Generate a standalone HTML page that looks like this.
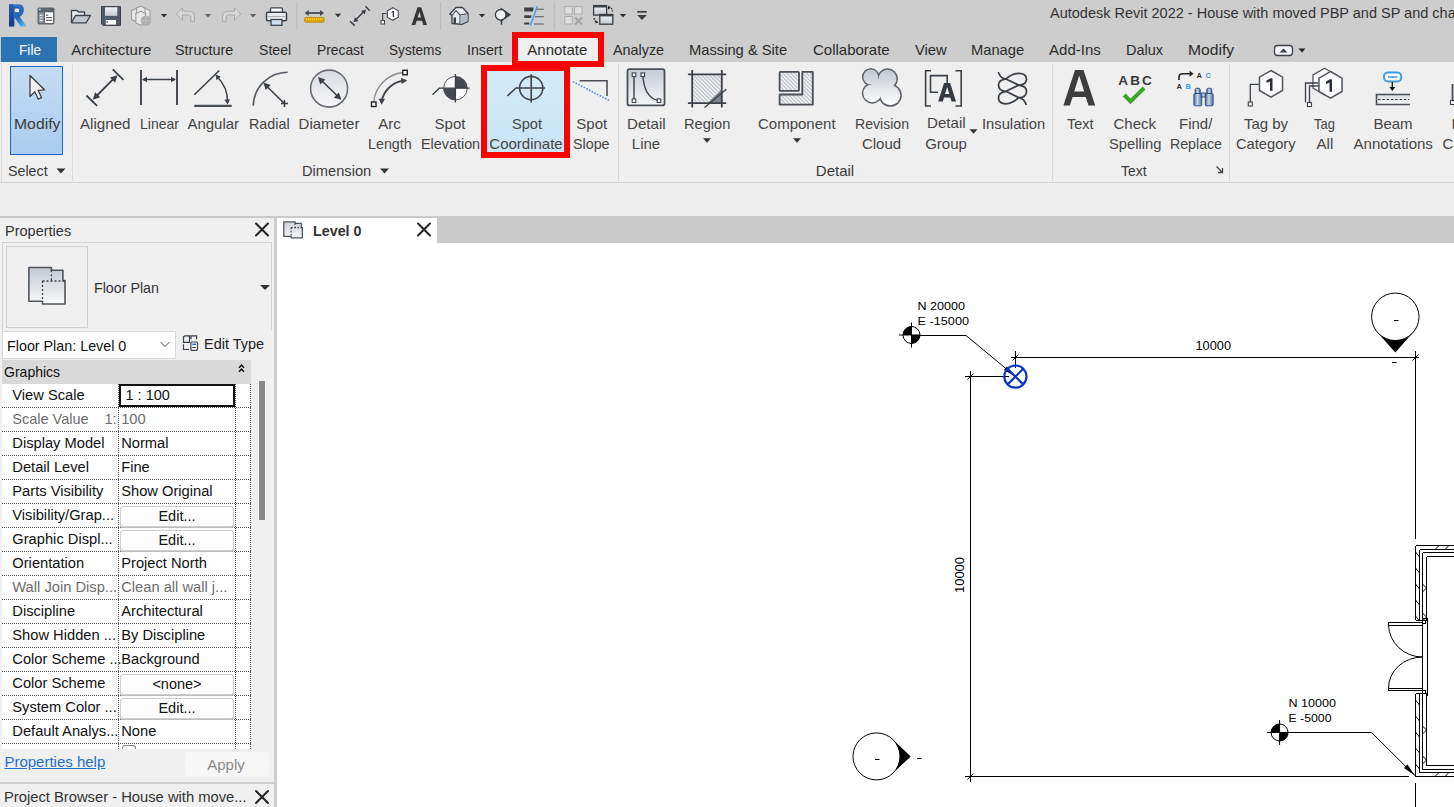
<!DOCTYPE html><html><head><meta charset="utf-8"><style>
*{margin:0;padding:0;box-sizing:border-box}
html,body{width:1454px;height:807px;overflow:hidden;background:#fff}
body{font-family:"Liberation Sans",sans-serif;color:#222;position:relative}
.a{position:absolute}
.t{position:absolute;white-space:nowrap;line-height:1}
svg{position:absolute;overflow:visible}
</style></head><body><div class="a" style="left:0px;top:0px;width:1454px;height:62px;background:#cdcdcd"></div>
<div class="t" style="left:1050.00px;top:6.23px;font-size:14.5px;color:#333;">Autodesk Revit 2022 - House with moved PBP and SP and cha</div>
<svg style="left:0;top:0" width="1" height="1"><defs><linearGradient id="rl" x1="0" y1="0" x2="1" y2="1"><stop offset="0" stop-color="#3a8ad8"/><stop offset=".55" stop-color="#2364b8"/><stop offset="1" stop-color="#62c8ec"/></linearGradient><linearGradient id="rs" x1="0" y1="0" x2="0" y2="1"><stop offset="0" stop-color="#2a62b4"/><stop offset="1" stop-color="#1a3780"/></linearGradient><linearGradient id="qg" x1="0" y1="0" x2="0" y2="1"><stop offset="0" stop-color="#f4f5f7"/><stop offset="1" stop-color="#c3c8d0"/></linearGradient></defs><path d="M9 4.2H18.5C23 4.2 24.2 7.5 23.8 10.8C23.4 14 21.5 16 19.8 16.8L26.7 26.4H20.8L14.5 17.5V26.4H9ZM14 8V12.8H17.6C19.2 12.8 19.8 11.8 19.8 10.4C19.8 9 19.1 8 17.6 8Z" fill="url(#rl)" fill-rule="evenodd"/><path d="M14 8H17.6C19.1 8 19.8 9 19.8 10.4C19.8 11.8 19.2 12.8 17.6 12.8H14Z" fill="#dfe3ea" stroke="#1d3f86" stroke-width="1"/><path d="M9 4.2H13.8V26.4H9Z" fill="url(#rs)"/><rect x="37.5" y="7.5" width="17" height="17" rx="1.8" fill="#5f656d"/><rect x="45" y="12.3" width="8" height="10.7" fill="#fff"/><rect x="38.8" y="12.3" width="5" height="10.7" fill="#8c9299"/><rect x="39" y="8.6" width="1.8" height="1.8" fill="#8fd0f5"/><path d="M39.8 15.3H42.5M39.8 17.9H42.5M39.8 20.5H42.5" stroke="#fff" stroke-width="1"/><path d="M46 15.2H48.2M46 17.6H52M46 20.3H52" stroke="#444" stroke-width="1"/><path d="M71.5 22.8V10.5H77L78.5 12H84.5V15.5" fill="url(#qg)" stroke="#3e444c" stroke-width="1.3" stroke-linejoin="round"/><path d="M71.5 22.8L75.5 15.5H90.5L86 22.8Z" fill="#c3c8d0" stroke="#3e444c" stroke-width="1.3" stroke-linejoin="round"/><path d="M101.5 6.5H120.5V25.5H103L101.5 24Z" fill="#525b67" stroke="#3b424c" stroke-width="1"/><rect x="105" y="7.3" width="12.3" height="8.6" fill="url(#qg)"/><rect x="105.8" y="20" width="10.2" height="4.6" fill="#fff"/><rect x="106.5" y="21" width="1.3" height="2" fill="#666"/><g fill="#e8e8e8" stroke="#9c9c9c" stroke-width="1.1" stroke-linejoin="round"><path d="M131.5 10.5L136 8.5L140.5 10.5V19.5L136 21.5L131.5 19.5Z"/><path d="M141 10.5L145.5 8.5L150 10.5V19.5L145.5 21.5L141 19.5Z"/><path d="M136.5 8L140.8 6.2L145 8V13L140.8 14.8L136.5 13Z"/><path d="M135.8 13.5L140.8 11.3L145.5 13.5V23L140.8 25.3L135.8 23Z"/></g><circle cx="146" cy="20.8" r="5.2" fill="#acacac"/><path d="M141 20.8H151M146 15.8V25.8" stroke="#c4c4c4" stroke-width=".8"/><path d="M160.8 14.0H167.2L164 17.6Z" fill="#333"/><path d="M204.8 14.0H211.2L208 17.6Z" fill="#666"/><path d="M249.8 14.0H256.2L253 17.6Z" fill="#666"/><path d="M334.8 13.7H341.2L338 17.3Z" fill="#333"/><path d="M478.8 14.0H485.2L482 17.6Z" fill="#333"/><path d="M619.8 14.0H626.2L623 17.6Z" fill="#333"/><path d="M176.3 14L182.5 7.8V11.2H189.5C192.5 11.2 194.5 13.5 194.5 16.5V21.5H190.8V17.2C190.8 15.8 190 15 188.5 15H182.5V20.3Z" fill="#d6d6d6" stroke="#a9a9a9" stroke-width="1" stroke-linejoin="round"/><path d="M240.7 14L234.5 7.8V11.2H227.5C224.5 11.2 222.5 13.5 222.5 16.5V21.5H226.2V17.2C226.2 15.8 227 15 228.5 15H234.5V20.3Z" fill="#d6d6d6" stroke="#a9a9a9" stroke-width="1" stroke-linejoin="round"/><rect x="270.5" y="7.8" width="12" height="6" rx="1" fill="#fbfbfb" stroke="#3a414a" stroke-width="1.3"/><rect x="266.5" y="12.3" width="20" height="8.5" rx="1.5" fill="#e9ebee" stroke="#3a414a" stroke-width="1.5"/><path d="M267 16.5H286" stroke="#aab0b8" stroke-width="1"/><rect x="271" y="19.5" width="11" height="5.8" fill="#cfe0ee" stroke="#3a414a" stroke-width="1.3"/><path d="M296.8 2V30" stroke="#b9b9b9" stroke-width="1"/><path d="M440.6 2V30" stroke="#b9b9b9" stroke-width="1"/><path d="M554.3 2V30" stroke="#b9b9b9" stroke-width="1"/><path d="M306 13H323" stroke="#424952" stroke-width="1.8"/><path d="M304.70 13.00L308.70 10.00L308.70 16.00Z" fill="#424952"/><path d="M324.00 13.00L320.00 16.00L320.00 10.00Z" fill="#424952"/><rect x="304.7" y="17.4" width="19.3" height="4.8" rx="1" fill="#e6a800" stroke="#b98300" stroke-width=".8"/><path d="M306 19H323" stroke="#fff2a0" stroke-width=".8" stroke-dasharray="1 1"/><path d="M365.4 6.3L369.7 10.7M350 21.3L354.8 25.6M355 20.5L364.5 11" stroke="#3b4149" stroke-width="1.5"/><path d="M366.00 9.50L364.78 14.55L361.01 10.97Z" fill="#3b4149"/><path d="M353.50 22.30L354.84 17.28L358.52 20.96Z" fill="#3b4149"/><path d="M392.80 7.70L398.26 10.85L398.26 17.15L392.80 20.30L387.34 17.15L387.34 10.85Z" fill="#fff" stroke="#50555c" stroke-width="1.2"/><path d="M386.4 13.5H382.7V20.5" stroke="#3b4149" stroke-width="1.1" fill="none"/><rect x="381" y="20.5" width="3.5" height="3.5" fill="#fff" stroke="#3b4149"/><path d="M390.8 12.5L393 11H394V17H392.7V12.6Z" fill="#333"/><path d="M417.5 7.3H421.2L427 25.1H423.4L422 20.8H416.7L415.3 25.1H411.6ZM417.6 17.6H421.1L419.35 11.8Z" fill="#363636" fill-rule="evenodd"/><path d="M449.8 14L456 7.5H462.5L468 13.5V21.5L462 24.3L452 23.5V15.5Z" fill="#e8eaee" stroke="#3b4149" stroke-width="1.3" stroke-linejoin="round"/><path d="M452 15.5L456 10.5L460 15V23.8M460 15L468 13.5M456 7.5L462.5 7.5" stroke="#3b4149" stroke-width="1.1" fill="none"/><rect x="453.5" y="17.5" width="2.5" height="6" fill="#3b4149"/><path d="M460.5 16L467.5 14.5V21L460.5 23.5Z" fill="#b5bcc6"/><path d="M500.7 7.4L511.1 14.8L500.7 22Z" fill="#3a3f46"/><circle cx="500.7" cy="14.8" r="5.3" fill="#eef0f3" stroke="#3a3f46" stroke-width="1.3"/><path d="M501.5 20V24.7" stroke="#3a3f46" stroke-width="1.5"/><path d="M524.2 7.4H533.7L533 11.5H524.2ZM524.2 15.3H531.5L531 18H524.2ZM524.2 22.4H529.5L529.2 24.4H524.2Z" fill="#3a3f46"/><path d="M536 9.3H543.8M535 16.7H543.8M534 24H543.8" stroke="#555" stroke-width="1.1"/><path d="M537.4 6.1L530.4 25.5" stroke="#4aa0f0" stroke-width="1.5"/><g fill="#dedede" stroke="#adadad" stroke-width="1"><rect x="564.8" y="6.6" width="7.5" height="7.5"/><rect x="574.5" y="6.6" width="7.5" height="7.5"/><rect x="564.8" y="16.5" width="7.5" height="7.5"/></g><path d="M575 17.5L582 24.5M582 17.5L575 24.5" stroke="#a5a5a5" stroke-width="2"/><rect x="593.6" y="5.6" width="13" height="9.5" fill="url(#qg)" stroke="#3a3f46" stroke-width="1.3"/><path d="M593.6 6.5H606.6" stroke="#3a3f46" stroke-width="2"/><rect x="599.8" y="14.5" width="13" height="9.7" fill="url(#qg)" stroke="#3a3f46" stroke-width="1.3"/><path d="M599.8 15.4H612.8" stroke="#3a3f46" stroke-width="2"/><path d="M609 7Q612 7.5 612.5 11.5M594 18Q594.5 21 596.5 22" stroke="#222" stroke-width="1.2" fill="none" stroke-dasharray="1.5 1"/><path d="M608 5.5L610.5 8L608 9.5Z M596 20.5L598.5 22.5L595.5 23.5Z" fill="#222"/><path d="M637.2 11.8H646.8" stroke="#3a3f46" stroke-width="1.7"/><path d="M637.2 15H646.8L642 19.9Z" fill="#3a3f46"/></svg>
<div class="a" style="left:1px;top:37px;width:56px;height:25px;background:#2b73b2"></div>
<div class="t" style="left:18.60px;top:42.30px;font-size:15px;color:#fff;transform:scaleX(0.913);transform-origin:0 0;">File</div>
<div class="a" style="left:518px;top:38px;width:80px;height:24px;background:#efefef"></div>
<div class="t" style="left:71.20px;top:42.10px;font-size:15px;color:#2b2b2b;">Architecture</div>
<div class="t" style="left:175.20px;top:42.10px;font-size:15px;color:#2b2b2b;transform:scaleX(0.959);transform-origin:0 0;">Structure</div>
<div class="t" style="left:259.20px;top:42.10px;font-size:15px;color:#2b2b2b;transform:scaleX(0.939);transform-origin:0 0;">Steel</div>
<div class="t" style="left:317.00px;top:42.10px;font-size:15px;color:#2b2b2b;transform:scaleX(0.921);transform-origin:0 0;">Precast</div>
<div class="t" style="left:389.30px;top:42.10px;font-size:15px;color:#2b2b2b;transform:scaleX(0.908);transform-origin:0 0;">Systems</div>
<div class="t" style="left:467.20px;top:42.10px;font-size:15px;color:#2b2b2b;transform:scaleX(0.944);transform-origin:0 0;">Insert</div>
<div class="t" style="left:527.30px;top:42.10px;font-size:15px;color:#2b2b2b;">Annotate</div>
<div class="t" style="left:613.20px;top:42.10px;font-size:15px;color:#2b2b2b;transform:scaleX(0.957);transform-origin:0 0;">Analyze</div>
<div class="t" style="left:689.20px;top:42.10px;font-size:15px;color:#2b2b2b;transform:scaleX(0.981);transform-origin:0 0;">Massing &amp; Site</div>
<div class="t" style="left:813.00px;top:42.10px;font-size:15px;color:#2b2b2b;">Collaborate</div>
<div class="t" style="left:915.00px;top:42.10px;font-size:15px;color:#2b2b2b;transform:scaleX(0.985);transform-origin:0 0;">View</div>
<div class="t" style="left:971.20px;top:42.10px;font-size:15px;color:#2b2b2b;transform:scaleX(0.980);transform-origin:0 0;">Manage</div>
<div class="t" style="left:1049.10px;top:42.10px;font-size:15px;color:#2b2b2b;">Add-Ins</div>
<div class="t" style="left:1125.60px;top:42.10px;font-size:15px;color:#2b2b2b;transform:scaleX(0.966);transform-origin:0 0;">Dalux</div>
<div class="t" style="left:1187.50px;top:42.10px;font-size:15px;color:#2b2b2b;transform:scaleX(1.045);transform-origin:0 0;">Modify</div>
<svg style="left:0;top:0" width="1" height="1"><rect x="1274.5" y="45.5" width="18" height="10" rx="3" fill="#f4f4f4" stroke="#3d4450" stroke-width="1.3"/><path d="M1279.5 52.5L1283.5 48.5L1287.5 52.5Z" fill="#3d4450"/></svg>
<svg style="left:0;top:0" width="1" height="1"><path d="M1298.5 48.5L1305.5 48.5L1302 52.5Z" fill="#222"/></svg>
<div class="a" style="left:0px;top:62px;width:1454px;height:120px;background:#efefef"></div>
<div class="a" style="left:0px;top:182px;width:1454px;height:1px;background:#d2d2d2"></div>
<div class="a" style="left:1px;top:63px;width:1px;height:119px;background:#d9d9d9"></div>
<div class="a" style="left:72px;top:64px;width:1px;height:117px;background:#d9d9d9"></div>
<div class="a" style="left:618px;top:64px;width:1px;height:117px;background:#d9d9d9"></div>
<div class="a" style="left:1052px;top:64px;width:1px;height:117px;background:#d9d9d9"></div>
<div class="a" style="left:1229px;top:64px;width:1px;height:117px;background:#d9d9d9"></div>
<div class="a" style="left:0px;top:183px;width:1454px;height:34px;background:#eeeeee"></div>
<div class="a" style="left:0px;top:216px;width:1454px;height:2px;background:#c9c9c9"></div>
<div class="a" style="left:10px;top:66px;width:53px;height:89px;background:linear-gradient(#c5dcf3,#a9cdee);border:1.5px solid #1c67c4"></div>
<div class="t" style="left:13.60px;top:115.80px;font-size:15px;color:#3b3b3b;transform:scaleX(1.050);transform-origin:0 0;">Modify</div>
<div class="t" style="left:8.40px;top:162.80px;font-size:15px;color:#3b3b3b;transform:scaleX(0.950);transform-origin:0 0;">Select</div>
<svg style="left:0;top:0" width="1" height="1"><path d="M56.5 168.5L65.5 168.5L61 173.5Z" fill="#333"/></svg>
<div class="t" style="left:301.90px;top:162.80px;font-size:15px;color:#3b3b3b;transform:scaleX(0.977);transform-origin:0 0;">Dimension</div>
<svg style="left:0;top:0" width="1" height="1"><path d="M380.0 168.5L389.0 168.5L384.5 173.5Z" fill="#333"/></svg>
<div class="t" style="left:815.80px;top:162.80px;font-size:15px;color:#3b3b3b;">Detail</div>
<div class="t" style="left:1121.00px;top:162.80px;font-size:15px;color:#3b3b3b;transform:scaleX(0.931);transform-origin:0 0;">Text</div>
<svg style="left:0;top:0" width="1" height="1"><path d="M1216.5 166.5L1222.5 172.5M1222.5 168v4.5h-4.5" stroke="#444" stroke-width="1.3" fill="none"/></svg>
<div class="a" style="left:487px;top:71px;width:77px;height:81px;background:linear-gradient(#d3eaf8,#c9e5f6)"></div>
<div class="a" style="left:481px;top:65px;width:89px;height:93px;border:6px solid #f00"></div>
<div class="a" style="left:512px;top:32px;width:92px;height:35px;border:6px solid #f00"></div>
<div class="t" style="left:79.50px;top:115.80px;font-size:15px;color:#444444;transform:scaleX(1.010);transform-origin:0 0;">Aligned</div>
<div class="t" style="left:139.60px;top:115.80px;font-size:15px;color:#444444;transform:scaleX(0.933);transform-origin:0 0;">Linear</div>
<div class="t" style="left:187.40px;top:115.80px;font-size:15px;color:#444444;">Angular</div>
<div class="t" style="left:248.50px;top:115.80px;font-size:15px;color:#444444;transform:scaleX(0.955);transform-origin:0 0;">Radial</div>
<div class="t" style="left:298.60px;top:115.80px;font-size:15px;color:#444444;">Diameter</div>
<div class="t" style="left:367.60px;top:136.30px;font-size:15px;color:#444444;transform:scaleX(0.952);transform-origin:0 0;">Length</div>
<div class="t" style="left:420.70px;top:136.30px;font-size:15px;color:#444444;transform:scaleX(0.958);transform-origin:0 0;">Elevation</div>
<div class="t" style="left:511.60px;top:115.80px;font-size:15px;color:#444444;transform:scaleX(0.974);transform-origin:0 0;">Spot</div>
<div class="t" style="left:489.30px;top:136.30px;font-size:15px;color:#444444;">Coordinate</div>
<div class="t" style="left:576.30px;top:115.80px;font-size:15px;color:#444444;">Spot</div>
<div class="t" style="left:572.80px;top:136.30px;font-size:15px;color:#444444;transform:scaleX(0.953);transform-origin:0 0;">Slope</div>
<div class="t" style="left:626.50px;top:115.80px;font-size:15px;color:#444444;transform:scaleX(1.010);transform-origin:0 0;">Detail</div>
<div class="t" style="left:683.50px;top:115.80px;font-size:15px;color:#444444;transform:scaleX(0.973);transform-origin:0 0;">Region</div>
<div class="t" style="left:758.00px;top:115.80px;font-size:15px;color:#444444;">Component</div>
<div class="t" style="left:854.50px;top:115.80px;font-size:15px;color:#444444;transform:scaleX(0.939);transform-origin:0 0;">Revision</div>
<div class="t" style="left:926.70px;top:115.10px;font-size:15px;color:#444444;transform:scaleX(1.010);transform-origin:0 0;">Detail</div>
<div class="t" style="left:981.60px;top:115.80px;font-size:15px;color:#444444;transform:scaleX(0.983);transform-origin:0 0;">Insulation</div>
<div class="t" style="left:1066.50px;top:115.80px;font-size:15px;color:#444444;transform:scaleX(0.964);transform-origin:0 0;">Text</div>
<div class="t" style="left:1108.60px;top:136.30px;font-size:15px;color:#444444;transform:scaleX(0.981);transform-origin:0 0;">Spelling</div>
<div class="t" style="left:1169.70px;top:136.30px;font-size:15px;color:#444444;transform:scaleX(0.945);transform-origin:0 0;">Replace</div>
<div class="t" style="left:1236.20px;top:136.30px;font-size:15px;color:#444444;transform:scaleX(0.979);transform-origin:0 0;">Category</div>
<div class="t" style="left:1314.40px;top:115.80px;font-size:15px;color:#444444;transform:scaleX(0.864);transform-origin:0 0;">Tag</div>
<div class="t" style="left:1353.60px;top:136.30px;font-size:15px;color:#444444;">Annotations</div>
<div class="t" style="left:378.25px;top:115.80px;font-size:15px;color:#444444;">Arc</div>
<div class="t" style="left:434.55px;top:115.80px;font-size:15px;color:#444444;">Spot</div>
<div class="t" style="left:631.80px;top:136.30px;font-size:15px;color:#444444;">Line</div>
<div class="t" style="left:861.90px;top:136.30px;font-size:15px;color:#444444;">Cloud</div>
<div class="t" style="left:925.15px;top:135.50px;font-size:15px;color:#444444;">Group</div>
<div class="t" style="left:1113.50px;top:115.80px;font-size:15px;color:#444444;">Check</div>
<div class="t" style="left:1179.00px;top:115.80px;font-size:15px;color:#444444;">Find/</div>
<div class="t" style="left:1243.90px;top:115.80px;font-size:15px;color:#444444;">Tag by</div>
<div class="t" style="left:1316.55px;top:136.30px;font-size:15px;color:#444444;">All</div>
<div class="t" style="left:1373.40px;top:115.80px;font-size:15px;color:#444444;">Beam</div>
<div class="t" style="left:1451.60px;top:115.80px;font-size:15px;color:#444444;">N</div>
<div class="t" style="left:1442.40px;top:136.30px;font-size:15px;color:#444444;">Ca</div>
<svg style="left:0;top:0" width="1" height="1"><path d="M703.0 138.25L711.0 138.25L707 142.75Z" fill="#333"/></svg>
<svg style="left:0;top:0" width="1" height="1"><path d="M793.0 138.25L801.0 138.25L797 142.75Z" fill="#333"/></svg>
<svg style="left:0;top:0" width="1" height="1"><path d="M969.5 129.25L977.5 129.25L973.5 133.75Z" fill="#333"/></svg>
<svg style="left:0;top:0" width="1" height="1"><defs><linearGradient id="gv" x1="0" y1="0" x2="0" y2="1"><stop offset="0" stop-color="#c6cbd4"/><stop offset="1" stop-color="#f6f7f9"/></linearGradient><linearGradient id="gc" x1="0" y1="0" x2="0" y2="1"><stop offset="0" stop-color="#c3c8d1"/><stop offset="1" stop-color="#ffffff"/></linearGradient><linearGradient id="gd" x1="0" y1="0" x2="0" y2="1"><stop offset="0" stop-color="#d9dce1"/><stop offset="1" stop-color="#f7f7f8"/></linearGradient><pattern id="hat" width="2.8" height="3" patternUnits="userSpaceOnUse" patternTransform="rotate(-45)"><rect width="2.8" height="3" fill="#eef0f2"/><rect width="1" height="3" fill="#b5b9bf"/></pattern><linearGradient id="gb" x1="0" y1="0" x2="1" y2="0"><stop offset="0" stop-color="#3e5f8e"/><stop offset=".5" stop-color="#a9bfdc"/><stop offset="1" stop-color="#3e5f8e"/></linearGradient></defs><path d="M30 75.5V96.5L34.8 91.8L38.3 99.2L41.6 97.7L38.2 90.4L44.5 89.8Z" fill="#f2f3f5" stroke="#3a3f46" stroke-width="1.3" stroke-linejoin="round"/><path d="M112.7 69.3L123.5 79.9M86.4 95.5L97.1 105.8M95 97.5L115 77.3" stroke="#3c4149" fill="none" stroke-width="1.8"/><path d="M117.50 75.20L115.04 82.68L109.99 77.54Z" fill="#3c4149"/><path d="M92.70 99.70L95.13 92.21L100.21 97.33Z" fill="#3c4149"/><path d="M141 70V105M177 70V105" stroke="#4a4f57" stroke-width="2"/><path d="M143 79.5H175" stroke="#3c4149" fill="none" stroke-width="1.5"/><path d="M142.00 79.50L147.00 76.70L147.00 82.30Z" fill="#3c4149"/><path d="M176.00 79.50L171.00 82.30L171.00 76.70Z" fill="#3c4149"/><path d="M194.3 94.7L219.3 70.5" stroke="#3c4149" fill="none" stroke-width="1.6"/><path d="M194.3 105.8H231.7" stroke="#4a4f57" stroke-width="2.2"/><path d="M216.5 76A36 36 0 0 1 227.6 103" stroke="#3c4149" fill="none" stroke-width="1.5"/><path d="M215.50 74.50L220.83 76.60L216.50 80.14Z" fill="#3c4149"/><path d="M227.60 104.50L224.35 99.78L229.93 99.26Z" fill="#3c4149"/><path d="M253.3 105.8A34.5 34 0 0 1 287.6 72.3" stroke="#555a62" stroke-width="1.6" fill="none"/><path d="M265 84.5L284.3 103.5M281 103.5H288M284.5 100V107" stroke="#3c4149" fill="none" stroke-width="1.6"/><path d="M263.30 82.50L270.80 84.90L265.70 90.00Z" fill="#3c4149"/><circle cx="329.1" cy="88.6" r="18.5" fill="url(#gd)" stroke="#6a6e74" stroke-width="1.6"/><path d="M321 80L338.5 97" stroke="#3c4149" fill="none" stroke-width="1.6"/><path d="M318.00 76.90L325.45 79.44L320.27 84.44Z" fill="#3c4149"/><path d="M341.50 99.80L333.91 97.71L338.79 92.41Z" fill="#3c4149"/><path d="M373.7 102A33 33 0 0 1 403 72.5" stroke="#8a8d92" stroke-width="1.4" fill="none"/><rect x="371.5" y="102" width="4.5" height="4.5" fill="#fff" stroke="#222" stroke-width="1.4"/><rect x="402.8" y="70.3" width="4.5" height="4.5" fill="#fff" stroke="#222" stroke-width="1.4"/><path d="M381.7 101A26 26 0 0 1 403 80.6" stroke="#3c4149" fill="none" stroke-width="1.8"/><path d="M407.30 80.60L401.48 84.12L401.13 77.73Z" fill="#3c4149"/><path d="M381.70 104.70L378.58 98.66L384.98 98.74Z" fill="#3c4149"/><circle cx="455.4" cy="88.2" r="11.8" fill="#fbfbfb" stroke="#555" stroke-width="1"/><path d="M455.4 88.2V76.4A11.8 11.8 0 0 1 467.2 88.2Z M455.4 88.2V100.0A11.8 11.8 0 0 1 443.59999999999997 88.2Z" fill="#454a52"/><path d="M432.5 94.8L439.3 88.2H469.6M455.4 74.1V102.6" stroke="#3c4149" fill="none" stroke-width="1.3"/><circle cx="531.2" cy="88" r="11.6" fill="none" stroke="#3f444b" stroke-width="1.6"/><path d="M507.4 96L516 88H545M531.2 74.3V102.5" stroke="#3f444b" stroke-width="1.6" fill="none"/><path d="M573 81.6L609.4 100.6" stroke="#5c8fd6" stroke-width="1.6" stroke-dasharray="1.6 1.4" fill="none"/><path d="M579.6 80.8H607V96" stroke="#4a4f57" stroke-width="1.6" fill="none"/><rect x="627.5" y="69.2" width="37" height="36.2" rx="2" fill="url(#gv)" stroke="#4a4f57" stroke-width="1.8"/><path d="M634 74.7V100.7M642.8 74.7Q644 98 659 100.7" stroke="#3c4149" fill="none" stroke-width="1.4"/><rect x="632.2" y="72.9" width="3.6" height="3.6" fill="#fff" stroke="#3c4149" stroke-width="1.1"/><rect x="632.2" y="98.9" width="3.6" height="3.6" fill="#fff" stroke="#3c4149" stroke-width="1.1"/><rect x="641.0" y="72.9" width="3.6" height="3.6" fill="#fff" stroke="#3c4149" stroke-width="1.1"/><rect x="657.2" y="98.9" width="3.6" height="3.6" fill="#fff" stroke="#3c4149" stroke-width="1.1"/><rect x="692.2" y="74.3" width="29.6" height="28.9" fill="url(#hat)"/><path d="M707.4 103.2L721.8 89.2V103.2Z" fill="#7d838c"/><path d="M687.9 74.3H726.2M687.9 103.2H726.2M692.2 70V107.5M721.8 70V107.5" stroke="#3c4149" fill="none" stroke-width="1.8"/><path d="M704.5 107.5L726.2 89.2" stroke="#3c4149" fill="none" stroke-width="1.4"/><rect x="779.6" y="71.8" width="19.4" height="19.1" rx="1" fill="url(#hat)" stroke="#4a4f57" stroke-width="1.8"/><path d="M802.3 71.8H812.8V104.6H779.6V94.5H802.3Z" fill="url(#hat)" stroke="#4a4f57" stroke-width="1.8" stroke-linejoin="round"/><defs><linearGradient id="gcl" gradientUnits="userSpaceOnUse" x1="0" y1="69" x2="0" y2="106"><stop offset="0" stop-color="#c2c7d0"/><stop offset="1" stop-color="#ffffff"/></linearGradient></defs><g fill="#5d6168"><circle cx="870.8" cy="77" r="8.9"/><circle cx="887.5" cy="78.8" r="10.5"/><circle cx="872.3" cy="93.2" r="10.5"/><circle cx="890.3" cy="95.3" r="11.5"/></g><g fill="url(#gcl)"><circle cx="870.8" cy="77" r="7.4"/><circle cx="887.5" cy="78.8" r="9.0"/><circle cx="872.3" cy="93.2" r="9.0"/><circle cx="890.3" cy="95.3" r="10.0"/><rect x="872" y="79" width="17" height="16"/></g><path d="M931 70.7H925.6V106H931M955.5 70.7H961.2V106H955.5" stroke="#3c4149" fill="none" stroke-width="1.6"/><path d="M938 92.3H930.5V75.6H947.2V83" stroke="#3c4149" fill="none" stroke-width="1.6"/><path d="M944 83H950.2L956 101.6H951.5L950.3 97.5H944L942.8 101.6H938.2ZM945 94H949.3L947.2 87Z" fill="#353a42" fill-rule="evenodd"/><path d="M998.5 72.8Q1001 78.9 1005.9 78.9M1005.9 78.9Q1012 73.3 1019 73.3Q1026.5 73.3 1026.5 79Q1026.5 84.8 1018.8 85.1M1005.9 78.9L1018.8 85.1M1005.9 78.9Q998.5 80 998.5 85.1Q998.5 91 1005.9 91.3M1018.8 85.1L1005.9 91.3M1018.8 85.1Q1026.5 86 1026.5 91.4Q1026.5 97.2 1018.8 97.7M1005.9 91.3L1018.8 97.7M1005.9 91.3Q998.5 92.5 998.5 97.8Q998.5 103.8 1006 103.8Q1012 103.8 1018.8 97.7M1018.8 97.7Q1024 98.5 1026 104.3" stroke="#3a3f46" stroke-width="1.7" fill="none" stroke-linecap="round"/><path d="M1075 70H1083.5L1095.2 105.6H1088.5L1085.8 97H1072.6L1069.9 105.6H1063.4ZM1074.2 91.5H1084.2L1079.2 75.5Z" fill="#3d3d3d" fill-rule="evenodd"/><text x="1118.3" y="84.9" font-family="Liberation Sans" font-weight="bold" font-size="13.5" fill="#3a3a3a" textLength="33.5" lengthAdjust="spacing">ABC</text><path d="M1124.3 95L1130.5 101.5L1144.1 88" stroke="#3aa62a" stroke-width="4" fill="none"/><path d="M1179 80V77C1179 74.5 1181 73.8 1183 73.8H1190" stroke="#222" stroke-width="1.6" fill="none"/><path d="M1193.60 73.80L1189.60 76.80L1189.60 70.80Z" fill="#222"/><text x="1196.6" y="77.6" font-family="Liberation Sans" font-weight="bold" font-size="7.5" fill="#333">A</text><text x="1205.4" y="77.6" font-family="Liberation Sans" font-weight="bold" font-size="7.5" fill="#3a9af0">C</text><text x="1176.4" y="88.8" font-family="Liberation Sans" font-weight="bold" font-size="7.5" fill="#333">A</text><text x="1185.4" y="88.8" font-family="Liberation Sans" font-weight="bold" font-size="7.5" fill="#3a9af0">B</text><defs><linearGradient id="gbt" x1="0" y1="0" x2="1" y2="0"><stop offset="0" stop-color="#4d6d9c"/><stop offset=".45" stop-color="#c9d8ec"/><stop offset="1" stop-color="#4d6d9c"/></linearGradient></defs><g fill="url(#gbt)" stroke="#34507a" stroke-width="1"><rect x="1195.2" y="88.3" width="5" height="6" rx="1.5"/><rect x="1206.8" y="88.3" width="5" height="6" rx="1.5"/><rect x="1193.9" y="93.5" width="7.8" height="12.3" rx="1.2"/><rect x="1205.3" y="93.5" width="7.8" height="12.3" rx="1.2"/><rect x="1201.2" y="93" width="4.6" height="4"/></g><path d="M1271.00 70.50L1282.52 77.15L1282.52 90.45L1271.00 97.10L1259.48 90.45L1259.48 77.15Z" fill="#fff" stroke="#50555c" stroke-width="1.5"/><path d="M1258.8 84.4H1250.3V102" stroke="#3c4149" stroke-width="1.3" fill="none"/><rect x="1248.3" y="102" width="4" height="4" fill="#fff" stroke="#3c4149" stroke-width="1.1"/><path d="M1266.5 80.5L1270.6 78.2H1272.5V90.7H1270V81.5L1266.5 83Z" fill="#2a2e35"/><path d="M1316.5 78L1324 73.5L1329 70.5" stroke="#50555c" stroke-width="1.3" fill="none"/><path d="M1324.50 68.20L1336.02 74.85L1336.02 88.15L1324.50 94.80L1312.98 88.15L1312.98 74.85Z" fill="#fff" stroke="#50555c" stroke-width="1.3"/><path d="M1330.50 71.50L1342.02 78.15L1342.02 91.45L1330.50 98.10L1318.98 91.45L1318.98 78.15Z" fill="#fff" stroke="#50555c" stroke-width="1.5"/><path d="M1318 83H1305.5V102.5M1318.7 86H1309.5V104" stroke="#3c4149" stroke-width="1.3" fill="none"/><rect x="1307.5" y="102.5" width="4" height="4" fill="#fff" stroke="#3c4149" stroke-width="1.1"/><path d="M1326 81.5L1330 79.2H1332V91.7H1329.5V82.5L1326 84Z" fill="#2a2e35"/><rect x="1384" y="72.5" width="17.2" height="9" rx="4" fill="#fff" stroke="#3d9cf0" stroke-width="2"/><path d="M1388 77H1397.5" stroke="#3d9cf0" stroke-width="1.6"/><path d="M1392.3 82V88" stroke="#111" stroke-width="1.3"/><path d="M1392.30 91.00L1389.30 87.00L1395.30 87.00Z" fill="#111"/><rect x="1376.5" y="94.5" width="33.5" height="10" fill="url(#gd)"/><path d="M1410 94.5H1376.5V104.5H1410" stroke="#4a4f57" stroke-width="1.6" fill="none"/><path d="M1378 99.5H1409" stroke="#333" stroke-width="1.2" stroke-dasharray="2.5 1.8"/><path d="M1452.5 84V102" stroke="#4a4f57" stroke-width="1.8"/><rect x="1450.5" y="100.5" width="4" height="4" fill="#fff" stroke="#3c4149" stroke-width="1.1"/></svg>
<div class="a" style="left:0px;top:218px;width:274px;height:589px;background:#f0f0f0"></div>
<div class="a" style="left:274px;top:218px;width:3px;height:589px;background:#cdcdcd"></div>
<div class="t" style="left:4.50px;top:223.30px;font-size:15px;color:#333;transform:scaleX(0.968);transform-origin:0 0;">Properties</div>
<svg style="left:0;top:0" width="1" height="1"><path d="M256 223.5L268 235.5M268 223.5L256 235.5" stroke="#222" stroke-width="2" stroke-linecap="round"/></svg>
<div class="a" style="left:2px;top:242px;width:270px;height:88px;border:1px solid #d4d4d4;border-bottom:none"></div>
<div class="a" style="left:6px;top:246px;width:82px;height:82px;border:1px solid #cfcfcf"></div>
<svg style="left:0;top:0" width="1" height="1"><defs><linearGradient id="fpg" x1="0" y1="0" x2="0" y2="1"><stop offset="0" stop-color="#c5c9d2"/><stop offset="1" stop-color="#f8f9fa"/></linearGradient></defs><path d="M28.9 267.5L51.4 267.5L51.4 270.2L62.9 270.2L62.9 280.5L65.0 280.5L65.0 304.0L42.5 304.0L42.5 301.2L28.9 301.2Z" fill="url(#fpg)" stroke="#50565e" stroke-width="1.6" stroke-linejoin="round"/><path d="M51.4 270.2V281.0M42.5 281.0H65.0M42.5 281.0V301.2" stroke="#3a4048" stroke-width="1.3" stroke-dasharray="2 2" fill="none"/></svg>
<div class="t" style="left:93.60px;top:280.40px;font-size:15px;color:#333;transform:scaleX(0.950);transform-origin:0 0;">Floor Plan</div>
<svg style="left:0;top:0" width="1" height="1"><path d="M260.0 285.0L270.0 285.0L265 290.0Z" fill="#333"/></svg>
<div class="a" style="left:2px;top:331px;width:174px;height:28px;background:#fff;border:1px solid #d9d9d9"></div>
<div class="t" style="left:6.50px;top:337.90px;font-size:15px;color:#111;transform:scaleX(0.954);transform-origin:0 0;">Floor Plan: Level 0</div>
<svg style="left:0;top:0" width="1" height="1"><path d="M160.5 342l4.5 4.5 4.5-4.5" stroke="#555" stroke-width="1" fill="none"/></svg>
<svg style="left:0;top:0" width="1" height="1"><path d="M183.5 337L184.8 335.8H189.5V342.4H183.5ZM191 339.3V335.8H196.6V339.3M183.5 344.3V349.5H189" fill="#eceef1" stroke="#3a3f46" stroke-width="1.2"/><rect x="190.9" y="342" width="6.6" height="8.3" rx="1" fill="#fff" stroke="#3a3f46" stroke-width="1.2"/><rect x="192.3" y="343.6" width="3.7" height="1.4" fill="#1f5fc0"/><path d="M192.2 347.5H196" stroke="#3a3f46" stroke-width="1"/></svg>
<div class="t" style="left:203.50px;top:336.00px;font-size:15px;color:#222;transform:scaleX(0.963);transform-origin:0 0;">Edit Type</div>
<div class="a" style="left:2px;top:360px;width:249px;height:24px;background:#dadada"></div>
<div class="t" style="left:4.40px;top:364.10px;font-size:15px;color:#111;transform:scaleX(0.935);transform-origin:0 0;">Graphics</div>
<svg style="left:0;top:0" width="1" height="1"><path d="M239 367.8l2.5-2.6 2.5 2.6M239 371.8l2.5-2.6 2.5 2.6" stroke="#111" stroke-width="1.5" fill="none"/></svg>
<div class="a" style="left:2px;top:384px;width:249px;height:365px;background:#fff"></div>
<svg style="left:0;top:0" width="1" height="1"><line x1="2" y1="407.5" x2="251" y2="407.5" stroke="#555" stroke-width="1" stroke-dasharray="1 1"/><line x1="2" y1="431.5" x2="251" y2="431.5" stroke="#555" stroke-width="1" stroke-dasharray="1 1"/><line x1="2" y1="455.5" x2="251" y2="455.5" stroke="#555" stroke-width="1" stroke-dasharray="1 1"/><line x1="2" y1="479.5" x2="251" y2="479.5" stroke="#555" stroke-width="1" stroke-dasharray="1 1"/><line x1="2" y1="503.5" x2="251" y2="503.5" stroke="#555" stroke-width="1" stroke-dasharray="1 1"/><line x1="2" y1="527.5" x2="251" y2="527.5" stroke="#555" stroke-width="1" stroke-dasharray="1 1"/><line x1="2" y1="551.5" x2="251" y2="551.5" stroke="#555" stroke-width="1" stroke-dasharray="1 1"/><line x1="2" y1="575.5" x2="251" y2="575.5" stroke="#555" stroke-width="1" stroke-dasharray="1 1"/><line x1="2" y1="599.5" x2="251" y2="599.5" stroke="#555" stroke-width="1" stroke-dasharray="1 1"/><line x1="2" y1="623.5" x2="251" y2="623.5" stroke="#555" stroke-width="1" stroke-dasharray="1 1"/><line x1="2" y1="647.5" x2="251" y2="647.5" stroke="#555" stroke-width="1" stroke-dasharray="1 1"/><line x1="2" y1="671.5" x2="251" y2="671.5" stroke="#555" stroke-width="1" stroke-dasharray="1 1"/><line x1="2" y1="695.5" x2="251" y2="695.5" stroke="#555" stroke-width="1" stroke-dasharray="1 1"/><line x1="2" y1="719.5" x2="251" y2="719.5" stroke="#555" stroke-width="1" stroke-dasharray="1 1"/><line x1="2" y1="743.5" x2="251" y2="743.5" stroke="#555" stroke-width="1" stroke-dasharray="1 1"/><line x1="118.5" y1="384" x2="118.5" y2="749" stroke="#555" stroke-width="1" stroke-dasharray="1 1"/><line x1="235.5" y1="384" x2="235.5" y2="749" stroke="#555" stroke-width="1" stroke-dasharray="1 1"/><line x1="250.5" y1="384" x2="250.5" y2="749" stroke="#555" stroke-width="1" stroke-dasharray="1 1"/></svg>
<div class="t" style="left:12.30px;top:387.56px;font-size:14.7px;color:#111;">View Scale</div>
<div class="a" style="left:119px;top:384px;width:116px;height:23px;border:2px solid #111;background:#fff"></div>
<div class="t" style="left:125.50px;top:387.73px;font-size:14.5px;color:#111;">1 : 100</div>
<div class="t" style="left:12.30px;top:411.73px;font-size:14.5px;color:#6d6d6d;">Scale Value</div>
<div class="t" style="left:104.50px;top:411.73px;font-size:14.5px;color:#6d6d6d;">1:</div>
<div class="t" style="left:121.20px;top:411.56px;font-size:14.7px;color:#6d6d6d;">100</div>
<div class="t" style="left:12.30px;top:435.56px;font-size:14.7px;color:#111;">Display Model</div>
<div class="t" style="left:121.20px;top:435.56px;font-size:14.7px;color:#111;">Normal</div>
<div class="t" style="left:12.30px;top:459.56px;font-size:14.7px;color:#111;">Detail Level</div>
<div class="t" style="left:121.20px;top:459.56px;font-size:14.7px;color:#111;">Fine</div>
<div class="t" style="left:12.30px;top:483.56px;font-size:14.7px;color:#111;">Parts Visibility</div>
<div class="t" style="left:121.20px;top:483.56px;font-size:14.7px;color:#111;">Show Original</div>
<div class="t" style="left:12.30px;top:507.56px;font-size:14.7px;color:#111;">Visibility/Grap...</div>
<div class="a" style="left:120px;top:505.5px;width:114px;height:21px;background:#fdfdfd;border:1px solid #cfcfcf;border-radius:3px;box-shadow:0 1px 0 #bdbdbd"></div>
<div class="t" style="left:158.45px;top:508.73px;font-size:14.5px;color:#111;">Edit...</div>
<div class="t" style="left:12.30px;top:531.56px;font-size:14.7px;color:#111;">Graphic Displ...</div>
<div class="a" style="left:120px;top:529.5px;width:114px;height:21px;background:#fdfdfd;border:1px solid #cfcfcf;border-radius:3px;box-shadow:0 1px 0 #bdbdbd"></div>
<div class="t" style="left:158.45px;top:532.73px;font-size:14.5px;color:#111;">Edit...</div>
<div class="t" style="left:12.30px;top:555.56px;font-size:14.7px;color:#111;">Orientation</div>
<div class="t" style="left:121.20px;top:555.56px;font-size:14.7px;color:#111;">Project North</div>
<div class="t" style="left:12.30px;top:579.56px;font-size:14.7px;color:#6d6d6d;">Wall Join Disp...</div>
<div class="t" style="left:121.20px;top:579.56px;font-size:14.7px;color:#6d6d6d;">Clean all wall j...</div>
<div class="t" style="left:12.30px;top:603.56px;font-size:14.7px;color:#111;">Discipline</div>
<div class="t" style="left:121.20px;top:603.56px;font-size:14.7px;color:#111;">Architectural</div>
<div class="t" style="left:12.30px;top:627.56px;font-size:14.7px;color:#111;">Show Hidden ...</div>
<div class="t" style="left:121.20px;top:627.56px;font-size:14.7px;color:#111;">By Discipline</div>
<div class="t" style="left:12.30px;top:651.56px;font-size:14.7px;color:#111;">Color Scheme ...</div>
<div class="t" style="left:121.20px;top:651.56px;font-size:14.7px;color:#111;">Background</div>
<div class="t" style="left:12.30px;top:675.56px;font-size:14.7px;color:#111;">Color Scheme</div>
<div class="a" style="left:120px;top:673.5px;width:114px;height:21px;background:#fdfdfd;border:1px solid #cfcfcf;border-radius:3px;box-shadow:0 1px 0 #bdbdbd"></div>
<div class="t" style="left:152.40px;top:676.73px;font-size:14.5px;color:#111;">&lt;none&gt;</div>
<div class="t" style="left:12.30px;top:699.56px;font-size:14.7px;color:#111;">System Color ...</div>
<div class="a" style="left:120px;top:697.5px;width:114px;height:21px;background:#fdfdfd;border:1px solid #cfcfcf;border-radius:3px;box-shadow:0 1px 0 #bdbdbd"></div>
<div class="t" style="left:158.45px;top:700.73px;font-size:14.5px;color:#111;">Edit...</div>
<div class="t" style="left:12.30px;top:723.56px;font-size:14.7px;color:#111;">Default Analys...</div>
<div class="t" style="left:121.20px;top:723.56px;font-size:14.7px;color:#111;">None</div>
<div class="a" style="left:122px;top:745px;width:14px;height:4px;border:1px solid #888;border-bottom:none;border-radius:3px 3px 0 0;background:#fff"></div>
<div class="a" style="left:251px;top:384px;width:8px;height:365px;background:#f0f0f0"></div>
<div class="a" style="left:259px;top:381px;width:6px;height:139px;background:#888"></div>
<div class="t" style="left:4.40px;top:754.10px;font-size:15px;color:#1f6fcf;text-decoration:underline;">Properties help</div>
<div class="a" style="left:185px;top:752px;width:84px;height:24px;background:#f7f7f7;border-radius:3px"></div>
<div class="t" style="left:207.25px;top:756.80px;font-size:15px;color:#8a8a8a;">Apply</div>
<div class="a" style="left:0px;top:782px;width:274px;height:2px;background:#cfcfcf"></div>
<div class="t" style="left:4.40px;top:789.00px;font-size:15px;color:#333;transform:scaleX(0.983);transform-origin:0 0;">Project Browser - House with move...</div>
<svg style="left:0;top:0" width="1" height="1"><path d="M256 791L268 803M268 791L256 803" stroke="#222" stroke-width="2" stroke-linecap="round"/></svg>
<div class="a" style="left:277px;top:218px;width:1177px;height:25px;background:#cacaca"></div>
<div class="a" style="left:277px;top:218px;width:160px;height:25px;background:#fff"></div>
<svg style="left:0;top:0" width="1" height="1"><defs><linearGradient id="tbg" x1="0" y1="0" x2="0" y2="1"><stop offset="0" stop-color="#d0d4db"/><stop offset="1" stop-color="#f4f5f7"/></linearGradient></defs><path d="M283.8 221.8H295.1V223.3H301.3V227.6H302.4V237.8H291.1V236.4H283.8Z" fill="url(#tbg)" stroke="#50565e" stroke-width="1.3" stroke-linejoin="round"/><path d="M295.1 223.3V227.6M291.1 227.6H302.4M291.1 227.6V236.4" stroke="#3a4048" stroke-width="1.1" stroke-dasharray="1.6 1.6" fill="none"/></svg>
<div class="t" style="left:312.50px;top:223.55px;font-size:14px;color:#333;font-weight:bold;transform:scaleX(1.021);transform-origin:0 0;">Level 0</div>
<svg style="left:0;top:0" width="1" height="1"><path d="M418 223.5L430 235.5M430 223.5L418 235.5" stroke="#222" stroke-width="2" stroke-linecap="round"/></svg>
<div class="a" style="left:277px;top:243px;width:1177px;height:564px;background:#fff"></div>
<svg style="left:0;top:0" width="1" height="1"><path d="M1011 357.5H1419M1015.5 351V368M1415.5 351V538.5" stroke="#000" stroke-width="1" fill="none" shape-rendering="crispEdges"/><path d="M965 376.5H1009M970.5 371V782M965 776.5H1409M1415.5 783V807" stroke="#000" stroke-width="1" fill="none" shape-rendering="crispEdges"/><path d="M1012.5 360.5L1018.5 354.5" stroke="#000" stroke-width="1"/><path d="M1412.5 360.5L1418.5 354.5" stroke="#000" stroke-width="1"/><path d="M967.5 379.5L973.5 373.5" stroke="#000" stroke-width="1"/><path d="M967.5 779.5L973.5 773.5" stroke="#000" stroke-width="1"/><text x="1195.5" y="349.7" font-size="13" font-family="Liberation Sans" fill="#000" textLength="35.5" lengthAdjust="spacingAndGlyphs">10000</text><text x="0" y="0" font-size="13" font-family="Liberation Sans" fill="#000" textLength="36" lengthAdjust="spacingAndGlyphs" transform="translate(963.8 593) rotate(-90)">10000</text><path d="M911.5 335L903.0 335A8.5 8.5 0 0 1 911.5 326.5Z" fill="#000"/><path d="M911.5 335L920.0 335A8.5 8.5 0 0 1 911.5 343.5Z" fill="#000"/><circle cx="911.5" cy="335" r="8.5" fill="none" stroke="#000" stroke-width="1"/><path d="M899.0 335H920.0M911.5 322.5V347.5" stroke="#000" stroke-width="1"/><path d="M920 335.5H966L1015.4 376.4" stroke="#000" stroke-width="1" fill="none"/><path d="M1015.4 376.5L1003.9 370.0L1006.9 366.4Z" fill="#000"/><text x="917.5" y="309.8" font-size="11" font-family="Liberation Sans" fill="#000" textLength="47.5" lengthAdjust="spacingAndGlyphs">N 20000</text><text x="917.5" y="324.8" font-size="11" font-family="Liberation Sans" fill="#000" textLength="51.5" lengthAdjust="spacingAndGlyphs">E -15000</text><circle cx="1015.4" cy="376.6" r="11.1" fill="none" stroke="#0a36c8" stroke-width="2.2"/><path d="M1007.6 368.8L1023.2 384.4M1023.2 368.8L1007.6 384.4" stroke="#0a36c8" stroke-width="2.2"/><path d="M1279.6 732.5L1271.1 732.5A8.5 8.5 0 0 1 1279.6 724.0Z" fill="#000"/><path d="M1279.6 732.5L1288.1 732.5A8.5 8.5 0 0 1 1279.6 741.0Z" fill="#000"/><circle cx="1279.6" cy="732.5" r="8.5" fill="none" stroke="#000" stroke-width="1"/><path d="M1267.1 732.5H1288.1M1279.6 720.0V745.0" stroke="#000" stroke-width="1"/><path d="M1288 732.5H1371.5L1414.9 775.5" stroke="#000" stroke-width="1" fill="none"/><path d="M1414.9 775.5L1404.0 768.1L1407.4 764.6Z" fill="#000"/><text x="1288.5" y="706.7" font-size="11" font-family="Liberation Sans" fill="#000" textLength="47.5" lengthAdjust="spacingAndGlyphs">N 10000</text><text x="1288.5" y="721.6" font-size="11" font-family="Liberation Sans" fill="#000" textLength="43" lengthAdjust="spacingAndGlyphs">E -5000</text><path d="M1395.3 352.5L1377.58 332.53A23.7 23.7 0 0 0 1413.02 332.53Z" fill="#000"/><circle cx="1395.3" cy="316.8" r="23.7" fill="none" stroke="#000" stroke-width="1"/><path d="M1394 320.5H1398.5M1392 362.5H1396.5M875 759.5H879.5M917 758.5H921.5" stroke="#000" stroke-width="1"/><path d="M910.7 756.4L892.65 773.47A23.5 23.5 0 0 0 892.65 739.33Z" fill="#000"/><circle cx="876.5" cy="756.4" r="23.5" fill="none" stroke="#000" stroke-width="1"/><path d="M1415.5 545.5H1454M1415.5 545.5V620M1415.5 693.5V776.5H1454M1419.5 549.5H1454M1419.5 549.5V620M1419.5 693.5V772.5H1454M1422.5 552.5H1454M1422.5 552.5V620M1422.5 693.5V769.5H1454M1426.5 556.5H1454M1426.5 556.5V620M1426.5 693.5V765.5H1454" stroke="#000" stroke-width="1" fill="none" shape-rendering="crispEdges"/><path d="M1415.5 552L1419.5 557M1415.5 568L1419.5 573M1415.5 584L1419.5 589M1415.5 600L1419.5 605M1415.5 616L1419.5 621M1415.5 700L1419.5 705M1415.5 716L1419.5 721M1415.5 732L1419.5 737M1415.5 748L1419.5 753M1415.5 764L1419.5 769M1435 549.5L1439 545.5M1435 776.5L1439 772.5M1445 549.5L1449 545.5M1445 776.5L1449 772.5M1422.5 584L1426.5 588L1422.5 592M1422.5 613L1426.5 617L1422.5 621M1422.5 726L1426.5 730L1422.5 734M1422.5 756L1426.5 760L1422.5 764" stroke="#000" stroke-width="1" fill="none"/><path d="M1422.5 620V693.5M1427.5 620V693.5M1388 622.5H1422.5M1388 625H1422.5M1388 622.5V625M1388 690.5H1422.5M1388 688H1422.5M1388 688V690.5" stroke="#000" stroke-width="1" fill="none" shape-rendering="crispEdges"/><path d="M1388.5 625A34 33 0 0 0 1422.5 657M1388.5 688A34 31 0 0 1 1422.5 657" stroke="#000" stroke-width="1" fill="none"/><path d="M1415.5 620.5H1427.5M1415.5 693.5H1427.5" stroke="#000" stroke-width="1" shape-rendering="crispEdges"/><rect x="1422.5" y="620.5" width="3" height="3" fill="none" stroke="#000" shape-rendering="crispEdges"/><rect x="1422.5" y="690.5" width="3" height="3" fill="none" stroke="#000" shape-rendering="crispEdges"/><path d="M1422.5 618.5H1427.5V696" stroke="#000" fill="none" shape-rendering="crispEdges"/></svg></body></html>
